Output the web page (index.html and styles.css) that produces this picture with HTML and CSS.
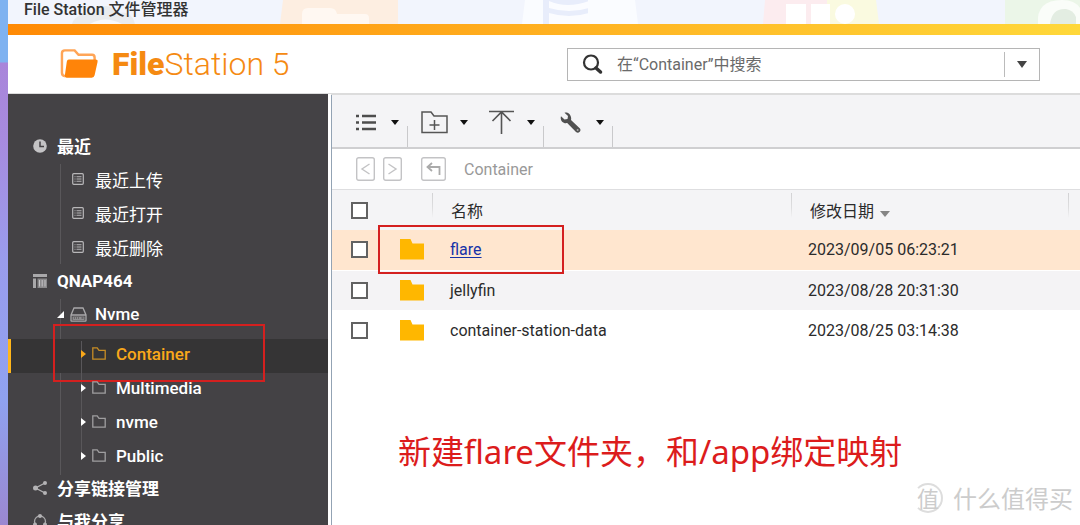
FILE: index.html
```html
<!DOCTYPE html>
<html lang="zh-CN">
<head>
<meta charset="utf-8">
<title>File Station 文件管理器</title>
<link rel="stylesheet" href="styles.css">
</head>
<body>
<svg class="defs" aria-hidden="true">
  <symbol id="doc" viewBox="0 0 12 12"><rect x=".7" y=".7" width="10.6" height="10.6" rx="1" fill="none" stroke="currentColor" stroke-width="1.2"/><path d="M2.500 3.800h1M4.500 3.800h5M2.500 6h1M4.500 6h5M2.500 8.200h1M4.500 8.200h5" stroke="currentColor" stroke-width="1.100"/></symbol>
  <symbol id="dir" viewBox="0 0 14 13"><path d="M.8 12.200V.8h4.400L7 3.300h6.200v8.900z" fill="none" stroke="currentColor" stroke-width="1.300"/></symbol>
  <symbol id="folder" viewBox="0 0 24 21"><path d="M0 0h10.500l2 4.500H24v16H0z" fill="#ffb700"/></symbol>
  <symbol id="right" viewBox="0 0 5 8"><path d="M0 0l5 4-5 4z" fill="currentColor"/></symbol>
  <symbol id="down" viewBox="0 0 8 5"><path d="M0 0h8L4 5z" fill="currentColor"/></symbol>
</svg>
<div class="desktop">
  <div class="window">
    <div class="titlebar">
      <svg class="ghosts" width="1072" height="24" viewBox="8 0 1072 24" aria-hidden="true">
        <path d="M72 24a20 13 0 0 1 22-11q12-14 24 0 14-3 17 11z" fill="#e9ebee"/>
        <path d="M90 24q15-9 32 0z" fill="#f8f9fb"/>
        <path d="M283 0h115v24H280z" fill="#fdeee1"/>
        <path d="M302 24V14q0-6 6-6h22q6 0 7 6h28q4 0 4 4v6z" fill="#fff8f2"/>
        <path d="M525 0h110l3 24H522z" fill="#fafcff"/>
        <path d="M543 0h45v24h-45z" fill="#e8edfb"/>
        <path d="M549 1q18 8 40 0v7q-20 6-40 0zM549 13q20 6 40 0v11h-40z" fill="#fbfcff"/>
        <path d="M765 0h62v24h-64z" fill="#fcecef"/><path d="M827 0h49l3 24h-52z" fill="#fafae0"/>
        <path d="M786 4h20v20h-20zM811 4h19v20h-19z" fill="#fff"/><circle cx="845" cy="14" r="10" fill="#fff"/>
        <path d="M1005 0h75v24h-75z" fill="#ebf6e8"/><path d="M1038 24q-2-24 24-24 13 0 18 8v16z" fill="#fafdf9"/><path d="M1050 24q2-16 16-15 7 1 10 8v7z" fill="#e3ede2"/>
      </svg>
      <span class="title">File Station 文件管理器</span>
    </div>
    <div class="accent"></div>
    <header class="header">
      <svg class="logo" width="40" height="30" viewBox="0 0 40 30" aria-hidden="true"><path d="M5 27.500Q2 27 2 24V4q0-3 3-3h10l4 4.500h14q2.500 0 2.500 3V11" fill="none" stroke="#ffa557" stroke-width="2.500"/><path d="M9 10.500h27.500q2.500 0 2 2.500l-3 13.500q-.5 2.500-3 2.500H7q-2.500 0-2-2.500l2-14q.3-2 2-2z" fill="#ff8409"/></svg>
      <h1 class="brand"><b>File</b>Station 5</h1>
      <form class="search">
        <svg width="21" height="21" viewBox="0 0 21 21" aria-hidden="true"><circle cx="9" cy="8.500" r="7" fill="none" stroke="#333" stroke-width="2.200"/><path d="M14 14l4.500 4" stroke="#333" stroke-width="3.500" stroke-linecap="round"/></svg>
        <input type="text" aria-label="搜索" placeholder="在“Container”中搜索">
        <button type="button" aria-label="搜索选项"><svg width="10" height="7" viewBox="0 0 8 5" preserveAspectRatio="none"><path d="M0 0h8L4 5z" fill="#444"/></svg></button>
      </form>
    </header>
    <div class="main">
      <nav class="sidebar">
        <ul class="tree">
          <li>
            <a class="row top" href="#"><svg width="14" height="14" viewBox="0 0 14 14"><circle cx="7" cy="7" r="6.800" fill="#c4c3c5"/><path d="M7 2.500V7.500h4" fill="none" stroke="#444245" stroke-width="1.500"/></svg>最近</a>
            <ul class="branch">
              <li><a class="row recent" href="#"><svg width="12" height="12"><use href="#doc"/></svg>最近上传</a></li>
              <li><a class="row recent" href="#"><svg width="12" height="12"><use href="#doc"/></svg>最近打开</a></li>
              <li><a class="row recent" href="#"><svg width="12" height="12"><use href="#doc"/></svg>最近删除</a></li>
            </ul>
          </li>
          <li>
            <a class="row top" href="#"><svg width="14" height="14" viewBox="0 0 14 14"><path d="M0 0h14v3H0zM0 4.500h3V14H0z" fill="#a9a8aa"/><path d="M4.500 4.500H14V14H4.500z" fill="#8a898b"/><path d="M6.500 6v6.500M9.200 6v6.500M12 6v6.500" stroke="#c4c3c5"/></svg>QNAP464</a>
            <ul class="branch">
              <li>
                <a class="row volume" href="#"><svg width="7" height="7" viewBox="0 0 7 7"><path d="M7 0v7H0z" fill="#fff"/></svg><svg width="17" height="15" viewBox="0 0 17 15"><path d="M1 8L4 1h9l3 7v5.500q0 .7-.7.700H1.700Q1 14.200 1 13.500zM1 8h15" fill="none" stroke="#a9a8aa" stroke-width="1.300"/><path d="M2.500 9.500h12V13h-12z" fill="#8e8d8f"/><path d="M4 11h1M6 11h1M8 11h1M11.500 11h2" stroke="#444245" stroke-width="1.200"/></svg>Nvme</a>
                <ul class="branch shares">
                  <li><a class="row share current" href="#"><svg width="5" height="8"><use href="#right"/></svg><svg class="dir" width="14" height="13"><use href="#dir"/></svg>Container</a></li>
                  <li><a class="row share" href="#"><svg width="5" height="8"><use href="#right"/></svg><svg class="dir" width="14" height="13"><use href="#dir"/></svg>Multimedia</a></li>
                  <li><a class="row share" href="#"><svg width="5" height="8"><use href="#right"/></svg><svg class="dir" width="14" height="13"><use href="#dir"/></svg>nvme</a></li>
                  <li><a class="row share" href="#"><svg width="5" height="8"><use href="#right"/></svg><svg class="dir" width="14" height="13"><use href="#dir"/></svg>Public</a></li>
                </ul>
              </li>
            </ul>
          </li>
          <li><a class="row top links" href="#"><svg width="14" height="14" viewBox="0 0 14 14"><path d="M12 2L2.500 7l9.500 5" fill="none" stroke="#b4b3b5" stroke-width="1.300"/><circle cx="2.500" cy="7" r="2.500" fill="#b4b3b5"/><circle cx="12" cy="2" r="2" fill="#b4b3b5"/><circle cx="12" cy="12" r="2" fill="#b4b3b5"/></svg>分享链接管理</a></li>
          <li><a class="row top links" href="#"><svg width="14" height="14" viewBox="0 0 14 14"><circle cx="7" cy="7.500" r="5.500" fill="none" stroke="#a9a8aa" stroke-width="1.300"/><circle cx="7" cy="2" r="2" fill="#b4b3b5"/><circle cx="2" cy="10.500" r="2" fill="#b4b3b5"/><circle cx="12" cy="10.500" r="2" fill="#b4b3b5"/></svg>与我分享</a></li>
        </ul>
      </nav>
      <main class="content">
        <div class="toolbar">
          <button type="button" class="tool wide" aria-label="视图"><svg width="20" height="17" viewBox="0 0 20 17"><path d="M0 2h3M0 8.500h3M0 15h3M6 2h14M6 8.500h14M6 15h14" stroke="#4d4d4d" stroke-width="2.300"/></svg><svg width="8" height="5"><use href="#down"/></svg></button>
          <span class="divider"></span>
          <button type="button" class="tool" aria-label="新建文件夹"><svg width="27" height="23" viewBox="0 0 27 23"><path d="M1 21.500V1h9l3 4h13v16.500zM13.500 9v10M8.500 14h10" fill="none" stroke="#555" stroke-width="1.500"/></svg><svg width="8" height="5"><use href="#down"/></svg></button>
          <button type="button" class="tool upload" aria-label="上传"><svg width="27" height="24" viewBox="0 0 27 24"><path d="M1 1.500h25M13.500 2v22M4.500 11l9-9 9 9" fill="none" stroke="#555" stroke-width="1.600"/></svg><svg width="8" height="5"><use href="#down"/></svg></button>
          <span class="divider"></span>
          <button type="button" class="tool wide" aria-label="工具"><svg width="21" height="21" viewBox="0 0 21 21"><path d="M4.500.7L8 4 7.500 7 4.500 7.600 1 4.200C-.3 8 3 12 7.200 11L16 20q2 1.500 3.700-.3 1.500-1.800 0-3.500L11 8C12 3.500 8.500-.5 4.500.7z" fill="#505050"/><circle cx="17.600" cy="17.900" r="1" fill="#aaa"/></svg><svg width="8" height="5"><use href="#down"/></svg></button>
          <span class="divider"></span>
        </div>
        <div class="pathbar">
          <button type="button" class="nav" aria-label="后退"><svg width="19" height="24" viewBox="0 0 19 24"><rect x=".7" y=".7" width="17.600" height="22.600" rx="2"/><path d="M13.500 7L6 12l7.500 5"/></svg></button>
          <button type="button" class="nav" aria-label="前进"><svg width="19" height="24" viewBox="0 0 19 24"><rect x=".7" y=".7" width="17.600" height="22.600" rx="2"/><path d="M5.500 7l7.500 5-7.500 5"/></svg></button>
          <button type="button" class="nav up" aria-label="上一级"><svg width="25" height="24" viewBox="0 0 25 24"><rect x=".7" y=".7" width="23.600" height="22.600" rx="2"/><path d="M18.500 18v-8H7M11 6l-4.500 4 4.500 4" stroke-width="1.800"/></svg></button>
          <span>Container</span>
        </div>
        <table class="files">
          <colgroup><col class="c-check"><col class="c-icon"><col class="c-name"><col class="c-date"><col></colgroup>
          <thead><tr><th class="check"><input type="checkbox" aria-label="全选"></th><th></th><th class="lined">名称</th><th class="lined">修改日期<svg width="10" height="6" viewBox="0 0 8 5" preserveAspectRatio="none"><path d="M0 0h8L4 5z" fill="#858585"/></svg></th><th class="lined"></th></tr></thead>
          <tbody>
            <tr class="selected"><td class="check"><input type="checkbox" aria-label="flare"></td><td class="icon"><svg width="24" height="21"><use href="#folder"/></svg></td><td class="name"><a href="#">flare</a></td><td>2023/09/05 06:23:21</td><td></td></tr>
            <tr class="alt"><td class="check"><input type="checkbox" aria-label="jellyfin"></td><td class="icon"><svg width="24" height="21"><use href="#folder"/></svg></td><td class="name">jellyfin</td><td>2023/08/28 20:31:30</td><td></td></tr>
            <tr><td class="check"><input type="checkbox" aria-label="container-station-data"></td><td class="icon"><svg width="24" height="21"><use href="#folder"/></svg></td><td class="name">container-station-data</td><td>2023/08/25 03:14:38</td><td></td></tr>
          </tbody>
        </table>
        <p class="note">新建flare文件夹，和/app绑定映射</p>
      </main>
    </div>
  </div>
  <div class="mark mark-tree"></div>
  <div class="mark mark-file"></div>
  <div class="watermark"><span class="seal">值</span>什么值得买</div>
</div>
</body>
</html>
```

FILE: styles.css
```css
* { box-sizing: border-box; }
body { margin: 0; font-family: Roboto, "Noto Sans CJK SC", sans-serif; font-size: 16px; color: #2b2b2b; }
h1, p, ul { margin: 0; padding: 0; font-weight: inherit; }
ul { list-style: none; }
button { border: 0; padding: 0; background: none; color: #111; }
svg { flex: none; display: block; }
.defs { position: absolute; width: 0; height: 0; }

.desktop { position: relative; display: flex; height: 100vh; padding-left: 8px; overflow: hidden;
  background: linear-gradient(#7fb2f0 0, #7fb2f0 62px, #a985da 63px, #a78bdf 140px, #9a9cec 260px, #8fa2f0 400px, #9b87d0 100%) left / 8px 100% no-repeat; }
.window { flex: 1; min-width: 0; display: flex; flex-direction: column; background: #fff; }

.titlebar { position: relative; height: 24px; background: #f2f5fd; overflow: hidden; }
.ghosts { position: absolute; left: 0; top: 0; }
.title { position: relative; display: block; padding-left: 16px; line-height: 20px; font-weight: 500; color: #333; }
.accent { height: 11px; background: linear-gradient(90deg, #ff8a05, #ffb020 50%, #ffd83a); }

.header { display: flex; align-items: center; height: 60px; padding: 0 40px 0 52px; border-bottom: 2px solid #dcdcdc; }
.logo { width: 39px; }
.brand { margin-left: 13px; font-size: 32px; font-weight: 300; line-height: 40px; color: #f58a12; white-space: nowrap; }
.brand b { font-weight: 900; }
.search { display: flex; align-items: center; width: 473px; height: 33px; margin-left: auto; padding-left: 14px; border: 1px solid #b5b5b5; }
.search input { flex: 1; min-width: 0; margin-left: 14px; padding: 2px 0 0; border: 0; outline: 0; font: inherit; line-height: 24px; background: none; }
.search input::placeholder { color: #6a6a6a; opacity: 1; }
.search button { display: flex; justify-content: center; width: 35px; padding: 9px 0; border-left: 1px solid #bbb; }

.main { flex: 1; min-height: 0; display: flex; }
.sidebar { flex: none; width: 323px; margin-top: -1px; padding-top: 35px; background: #444245; border-right: 3px solid #fff; font-size: 17px; }
.row { display: flex; align-items: center; height: 34px; color: #fff; text-decoration: none; font-weight: 400; }
.row svg { position: relative; z-index: 1; }
.row.top { height: 33px; padding-left: 25px; gap: 10px; font-weight: 700; }
.row.links { padding-bottom: 8px; }
.row.recent { padding-left: 64px; gap: 11px; }
.row.recent svg { color: #b8b7b9; }
.row.volume { padding-left: 49px; gap: 6px; font-weight: 500; }
.row.volume svg + svg { margin-right: 2px; }
.row.share { padding: 0 0 5px 73px; gap: 6px; font-weight: 500; }
.row.share .dir { color: #9f9ea0; margin-right: 4px; }
.branch { position: relative; }
.branch::before { content: ""; position: absolute; left: 52px; top: 2px; bottom: 0; width: 1px; background: #59575a; }
.shares { margin-top: 8px; }
.shares::before { left: 73px; bottom: 20px; }
.row.current { padding-left: 70px; border-left: 3px solid #ffb61a; background: #353435; color: #f9a81a; }
.row.current .dir { color: #c88d25; }

.content { flex: 1; min-width: 0; border-left: 1px solid #93a3b4; }
.toolbar { display: flex; align-items: center; height: 54px; padding-left: 24px; background: #f4f4f6; border-bottom: 2px solid #cfcfd1; }
.tool { display: flex; align-items: center; gap: 12px; padding-top: 2px; }
.tool.wide { gap: 15px; }
.tool.upload { margin-left: 20px; }
.divider { align-self: flex-end; width: 1px; height: 21px; margin: 0 13px 0 8px; background: #c9c9cb; }
.upload + .divider { margin-right: 16px; }

.pathbar { display: flex; align-items: center; gap: 8px; height: 41px; padding-left: 24px; border-bottom: 1px solid #dedee0; color: #999; }
.nav svg { fill: none; stroke: #c3c3c5; stroke-width: 1.4; }
.nav.up { margin: 0 10px 0 11px; }
.nav.up path { stroke: #aaa; }

.files { width: 100%; border-collapse: collapse; table-layout: fixed; }
.c-check { width: 48px; }
.c-icon { width: 52px; }
.c-name { width: 48%; }
.c-date { width: 37%; }
.files th, .files td { height: 40px; padding: 0 0 0 17px; text-align: left; font-weight: 400; background-clip: padding-box; }
.files thead { background: #f4f4f6; }
.files .lined { padding-left: 19px; background: linear-gradient(#d2d2d4, #dededf 60%, #f4f4f6) left 3px / 1px 25px no-repeat; }
.files th svg { display: inline-block; margin-left: 6px; }
.files .check { padding-left: 19px; }
.files .icon { padding-left: 20px; }
.files .name { padding-left: 18px; }
.files tbody tr { border-bottom: 1px solid #fff; }
.files .selected { background: #ffe6cf; }
.files .alt { background: #f4f3f5; }
.files a { color: #1632a8; text-underline-offset: 2px; }
.files input { appearance: none; display: block; width: 17px; height: 17px; margin: 0; border: 2px solid #626262; background: #fff; }

.note { margin: 78px 0 0 66px; font-family: "Noto Sans", "Noto Sans CJK SC", sans-serif; font-size: 33px; line-height: 46px; color: #dc1c1c; white-space: nowrap; }

.mark { position: absolute; border: 2px solid #d4201f; }
.mark-tree { left: 53px; top: 324px; width: 212px; height: 58px; }
.mark-file { left: 378px; top: 225px; width: 186px; height: 49px; }
.watermark { position: absolute; right: 7px; bottom: 11px; display: flex; align-items: center; gap: 10px; font-family: "Noto Sans CJK SC", sans-serif; font-size: 24px; line-height: 32px; color: #ccc; white-space: nowrap; }
.seal { width: 30px; height: 30px; border: 2px solid #ddd; border-left-color: transparent; border-radius: 50%; font-size: 22px; line-height: 25px; text-align: center; }
```
